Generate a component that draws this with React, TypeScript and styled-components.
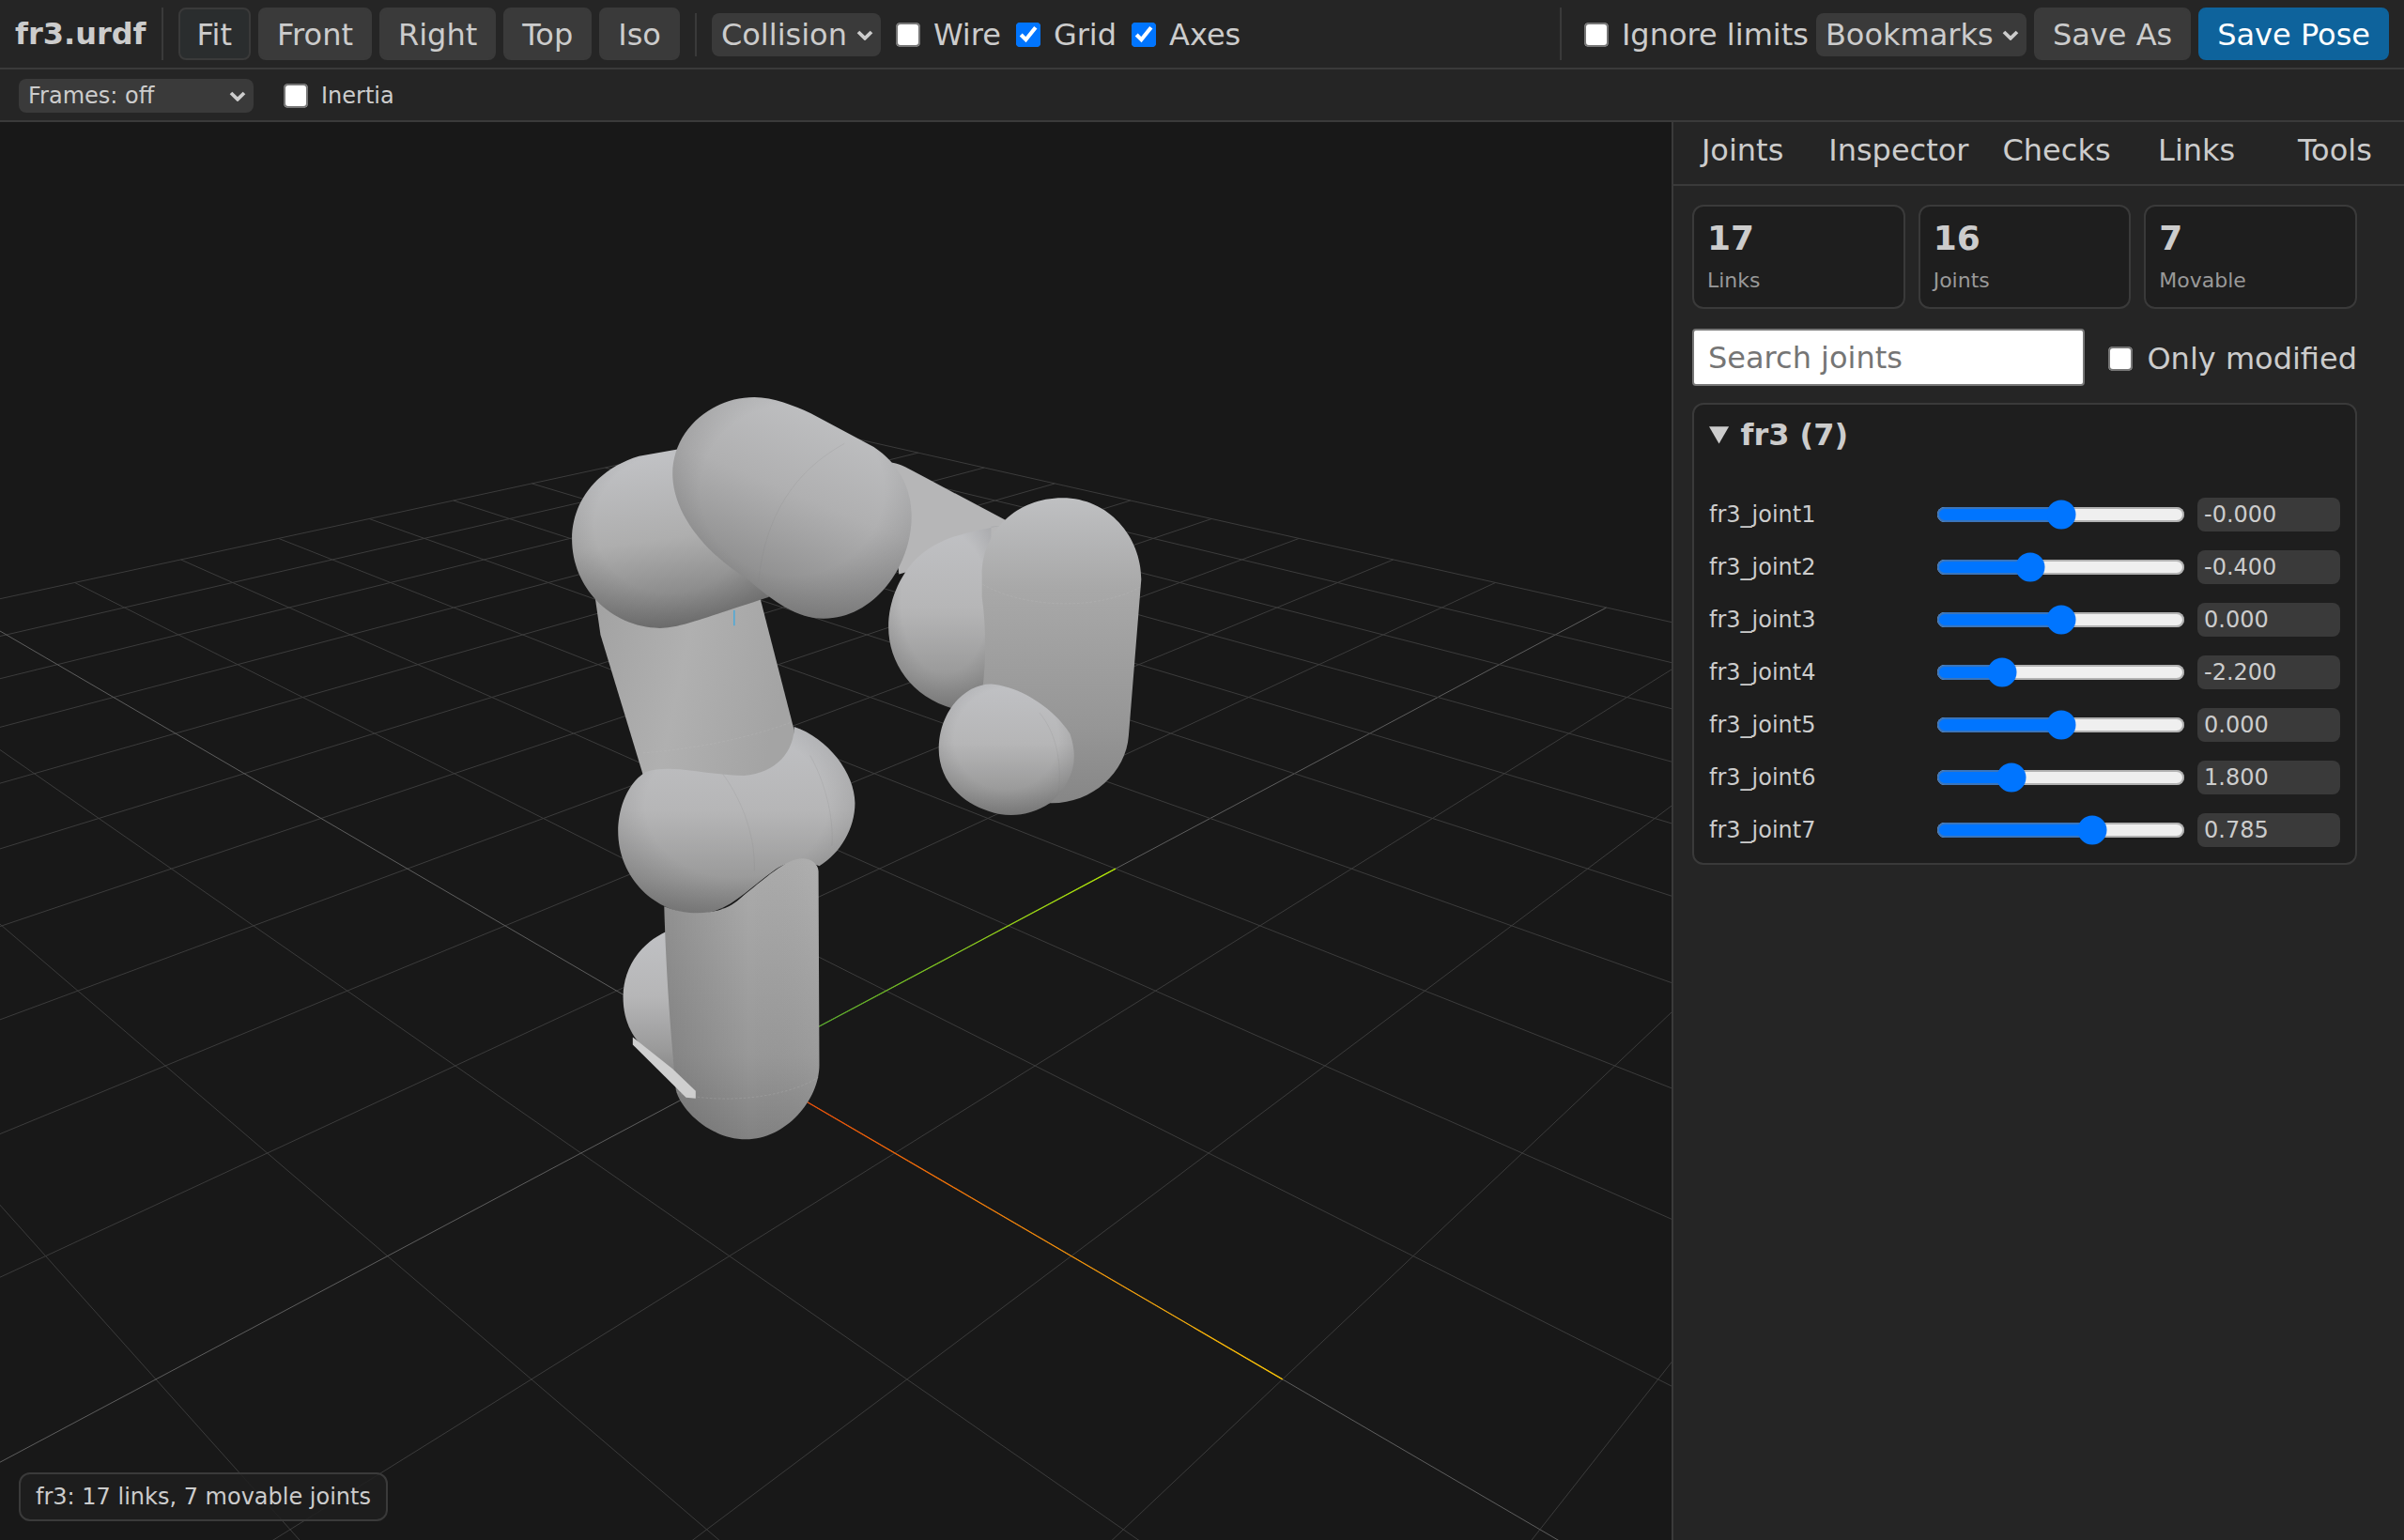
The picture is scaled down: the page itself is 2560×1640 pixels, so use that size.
import React from 'react'
import styled, {createGlobalStyle} from 'styled-components'

const GlobalStyle = createGlobalStyle`
  html, body {
    margin: 0;
    padding: 0;
    background: #181818;
    overflow: hidden;
  }
  #root {
    zoom: 2;
    width: 1280px;
    height: 820px;
    overflow: hidden;
  }
`

const Shell = styled.div`
  display: flex;
  flex-direction: column;
  width: 1280px;
  height: 820px;
  background: #252525;
  color: #cccccc;
  font-family: 'DejaVu Sans', sans-serif;
  font-size: 16px;
`

const Toolbar = styled.div`
  display: flex;
  align-items: stretch;
  gap: 8px;
  height: 36px;
  box-sizing: content-box;
  padding: 0 8px;
  border-bottom: 1px solid #3a3a3a;
  & > * {
    margin-top: 4px;
    margin-bottom: 4px;
  }
`

const SubBar = styled.div`
  display: flex;
  align-items: center;
  gap: 12px;
  height: 27px;
  padding: 0 10px;
  border-bottom: 1px solid #3a3a3a;
  font-size: 12px;
`

const Brand = styled.div`
  display: flex;
  align-items: center;
  font-weight: 700;
`

const Separator = styled.div<{$inset?: boolean}>`
  width: 1px;
  background: #3a3a3a;
  margin-top: ${p => (p.$inset ? '7px' : '4px')};
  margin-bottom: ${p => (p.$inset ? '6px' : '4px')};
`

const Group = styled.div`
  display: flex;
  align-items: center;
  gap: 4px;
`

const Spacer = styled.div`
  flex: 1;
`

const ToolButton = styled.button<{$variant?: 'active' | 'primary'}>`
  height: 28px;
  padding: 1px 9px 0;
  font: inherit;
  border-radius: 4px;
  border: 1px solid
    ${p => (p.$variant === 'primary' ? '#0e639c' : '#3a3a3a')};
  color: ${p => (p.$variant === 'primary' ? '#ffffff' : '#cccccc')};
  background: ${p =>
    p.$variant === 'primary'
      ? '#0e639c'
      : p.$variant === 'active'
        ? '#2a2d2e'
        : '#3a3a3a'};
`

const chevron = encodeURIComponent(
  '<svg xmlns="http://www.w3.org/2000/svg" viewBox="0 0 9 5.5"><path d="M1 1l3.5 3.4L8 1" fill="none" stroke="#cccccc" stroke-width="1.9"/></svg>',
)

const Select = styled.select<{$width?: number}>`
  appearance: none;
  font: inherit;
  color: #cccccc;
  border: none;
  border-radius: 4px;
  margin-top: 1px;
  padding: 2px 17.5px 2px 5px;
  width: ${p => (p.$width ? `${p.$width}px` : 'auto')};
  background: #3a3a3a url("data:image/svg+xml,${chevron}") no-repeat right 4px center / 9px 5.5px;
`

const CheckLabel = styled.label<{$gap?: number}>`
  display: inline-flex;
  align-items: center;
  gap: ${p => p.$gap ?? 4}px;
  padding-top: 1px;
  white-space: nowrap;
`

const Main = styled.div`
  flex: 1;
  display: flex;
  min-height: 0;
`

const Viewport = styled.div`
  position: relative;
  flex: 1;
  background: #181818;
  overflow: hidden;
  svg {
    display: block;
    width: 100%;
    height: 100%;
  }
`

const StatusBadge = styled.div`
  position: absolute;
  left: 10px;
  bottom: 10px;
  padding: 5px 8px;
  font-size: 12px;
  line-height: 14px;
  background: rgba(30, 30, 30, 0.85);
  border: 1px solid #3a3a3a;
  border-radius: 6px;
`

const Sidebar = styled.aside`
  width: 389px;
  display: flex;
  flex-direction: column;
  border-left: 1px solid #3a3a3a;
`

const Tabs = styled.div`
  display: flex;
  height: 33px;
  border-bottom: 1px solid #3a3a3a;
`

const Tab = styled.div`
  flex: 1 1 0;
  display: flex;
  align-items: center;
  justify-content: center;
  padding: 0 9px 3px;
`

const SideContent = styled.div`
  display: flex;
  flex-direction: column;
  padding: 10px 25px 10px 10px;
`

const Stats = styled.div`
  display: grid;
  grid-template-columns: repeat(3, 1fr);
  gap: 7px;
`

const StatCard = styled.div`
  height: 55.5px;
  box-sizing: border-box;
  padding: 6.5px 7px;
  background: #1e1e1e;
  border: 1px solid #3a3a3a;
  border-radius: 6px;
`

const StatValue = styled.div`
  font-size: 18px;
  line-height: 21px;
  font-weight: 700;
`

const StatLabel = styled.div`
  margin-top: 5.5px;
  font-size: 11px;
  line-height: 13px;
  color: #999999;
`

const SearchRow = styled.div`
  display: flex;
  align-items: center;
  gap: 8.5px;
  margin-top: 10.5px;
`

const SearchInput = styled.input`
  flex: 1;
  min-width: 0;
  height: 30.5px;
  box-sizing: border-box;
  padding: 0 7.5px;
  font: inherit;
  background: #ffffff;
  border: 1px solid #767676;
  border-radius: 2px;
  &::placeholder {
    color: #757575;
  }
`

const JointPanel = styled.details`
  margin-top: 9px;
  padding: 6.5px 8px 8.5px;
  background: #1e1e1e;
  border: 1px solid #3a3a3a;
  border-radius: 6px;
`

const PanelTitle = styled.summary`
  font-weight: 700;
  line-height: 19px;
  margin-bottom: 24px;
`

const PanelName = styled.span`
  margin-left: 3px;
`

const JointList = styled.div`
  display: flex;
  flex-direction: column;
  gap: 10px;
`

const JointRow = styled.div`
  display: grid;
  grid-template-columns: 114.5px 132.5px 76px;
  column-gap: 6.5px;
  align-items: center;
  height: 18px;
  font-size: 12px;
`

const JointSlider = styled.input`
  margin: 0;
  width: 132.5px;
`

const JointValue = styled.input`
  width: 100%;
  box-sizing: border-box;
  height: 18px;
  padding: 2px 3.5px;
  font: inherit;
  color: #cccccc;
  background: #3a3a3a;
  border: none;
  border-radius: 4px;
`

const joints = [
  {name: 'fr3_joint1', value: '-0.000', pos: 0.5},
  {name: 'fr3_joint2', value: '-0.400', pos: 0.36},
  {name: 'fr3_joint3', value: '0.000', pos: 0.5},
  {name: 'fr3_joint4', value: '-2.200', pos: 0.233},
  {name: 'fr3_joint5', value: '0.000', pos: 0.5},
  {name: 'fr3_joint6', value: '1.800', pos: 0.274},
  {name: 'fr3_joint7', value: '0.785', pos: 0.645},
]

// floor grid homography, i along +X, j along +Y (canvas pixels)
const project = (i: number, j: number) => {
  const w = 1 - 0.07604 * (i - j)
  return {
    x: (793.5 + 86.9 * i + 221.8 * j) / w,
    y: (1005 + 9.485 * (i - j)) / w,
  }
}

const gridSegments = () => {
  const lines: {a: {x: number; y: number}; b: {x: number; y: number}; major: boolean}[] = []
  for (let k = -10; k <= 10; k++) {
    lines.push({
      a: project(k, Math.max(-10, k - 12.4)),
      b: project(k, 10),
      major: k === 0,
    })
    lines.push({
      a: project(-10, k),
      b: project(Math.min(10, k + 12.4), k),
      major: k === 0,
    })
  }
  return lines
}

// one shaded body of the arm: base gradient plus a soft darkening at its rim
const Part = ({d, fill}: {d: string; fill: string}) => (
  <>
    <path fill={`url(#${fill})`} d={d} />
    <path fill="url(#rim)" d={d} />
  </>
)

const RobotScene = () => {
  const origin = project(0, 0)
  const xEnd = project(3, 0)
  const yEnd = project(0, 3)
  return (
    <svg viewBox="0 0 1780 1510" preserveAspectRatio="none">
      <defs>
        <linearGradient id="axisX" gradientUnits="userSpaceOnUse" x1={origin.x} y1={origin.y} x2={xEnd.x} y2={xEnd.y}>
          <stop offset="0" stopColor="#f03c00" />
          <stop offset="1" stopColor="#ffc800" />
        </linearGradient>
        <linearGradient id="axisY" gradientUnits="userSpaceOnUse" x1={origin.x} y1={origin.y} x2={yEnd.x} y2={yEnd.y}>
          <stop offset="0" stopColor="#40a030" />
          <stop offset="1" stopColor="#b4e800" />
        </linearGradient>
        <radialGradient id="rim" cx="0.5" cy="0.42" r="0.62">
          <stop offset="0.62" stopColor="#000" stopOpacity="0" />
          <stop offset="1" stopColor="#000" stopOpacity="0.14" />
        </radialGradient>
        <linearGradient id="dome" x1="0" y1="0" x2="0" y2="1">
          <stop offset="0" stopColor="#c0c1c4" />
          <stop offset="0.45" stopColor="#b6b6b7" />
          <stop offset="0.8" stopColor="#9b9b9b" />
          <stop offset="1" stopColor="#868686" />
        </linearGradient>
        <linearGradient id="bigCap" x1="0.75" y1="0" x2="0.3" y2="1">
          <stop offset="0" stopColor="#c2c3c5" />
          <stop offset="0.45" stopColor="#b0b0b1" />
          <stop offset="1" stopColor="#808080" />
        </linearGradient>
        <linearGradient id="elbow" x1="0.4" y1="0" x2="0.55" y2="1">
          <stop offset="0" stopColor="#c2c3c6" />
          <stop offset="0.5" stopColor="#aeaeae" />
          <stop offset="1" stopColor="#777777" />
        </linearGradient>
        <linearGradient id="capsule" x1="0" y1="0" x2="0" y2="1">
          <stop offset="0" stopColor="#bfc0c2" />
          <stop offset="0.3" stopColor="#a8a8a8" />
          <stop offset="0.75" stopColor="#969696" />
          <stop offset="1" stopColor="#868686" />
        </linearGradient>
        <linearGradient id="lowerArm" x1="0" y1="0" x2="0" y2="1">
          <stop offset="0" stopColor="#acacac" />
          <stop offset="0.7" stopColor="#989898" />
          <stop offset="1" stopColor="#828282" />
        </linearGradient>
        <linearGradient id="lowerArmSide" x1="0" y1="0" x2="1" y2="0">
          <stop offset="0" stopColor="#000" stopOpacity="0.14" />
          <stop offset="0.55" stopColor="#000" stopOpacity="0" />
          <stop offset="1" stopColor="#fff" stopOpacity="0.04" />
        </linearGradient>
        <linearGradient id="forearm" x1="0" y1="0" x2="1" y2="0.2">
          <stop offset="0" stopColor="#a2a2a2" />
          <stop offset="0.5" stopColor="#b0b0b0" />
          <stop offset="1" stopColor="#a4a4a4" />
        </linearGradient>
      </defs>

      <g>
        {gridSegments().map((l, n) => (
          <line
            key={n}
            x1={l.a.x}
            y1={l.a.y}
            x2={l.b.x}
            y2={l.b.y}
            stroke={l.major ? '#5e5e5e' : '#3c3c3c'}
            strokeWidth="1"
          />
        ))}
        <line x1={origin.x} y1={origin.y} x2={xEnd.x} y2={xEnd.y} stroke="url(#axisX)" strokeWidth="1.2" />
        <line x1={origin.x} y1={origin.y} x2={yEnd.x} y2={yEnd.y} stroke="url(#axisY)" strokeWidth="1.2" />
      </g>

      {/* arm traced from the render, coordinates in crop space */}
      <g transform="translate(560 270) scale(0.4464 0.5357)">
        <path fill="#b6b6b7" d="M860,172 C880,172 900,178 920,188 L1150,290 L1120,340 L890,395 Z" />
        <Part fill="dome" d="M1135,298 C1060,310 985,320 930,365 C890,400 865,450 865,500 C865,570 920,640 1020,662 L1110,640 L1110,300 Z" />
        <path fill="url(#capsule)" d="M1088,400 C1086,310 1170,243 1280,243 C1390,243 1468,320 1468,405 L1438,715 C1432,790 1350,850 1255,850 L1110,850 L1090,620 C1098,560 1098,500 1088,440 Z" />
        <Part fill="dome" d="M985,742 C985,670 1045,613 1110,613 C1180,618 1258,660 1298,712 C1322,770 1300,812 1250,850 C1205,875 1150,880 1105,866 C1040,850 985,805 985,742 Z" />

        <path fill="url(#forearm)" d="M165,440 L178,515 L280,795 L520,800 C600,790 640,750 640,705 L555,430 Z" />
        <Part fill="elbow" d="M365,146 L270,160 C170,185 110,250 110,325 C110,420 200,500 320,502 C370,502 430,480 580,440 L500,300 Z" />
        <Part fill="bigCap" d="M350,195 C350,110 440,43 545,43 C590,43 640,60 680,75 L830,142 C885,172 920,220 920,280 C920,380 830,483 710,483 C650,483 590,450 530,405 C440,360 350,280 350,195 Z" />

        <Part fill="dome" d="M285,788 C235,815 220,870 220,905 C220,1000 310,1070 410,1070 C480,1070 530,1020 590,985 C620,965 660,960 700,975 C750,950 785,900 785,850 C785,790 720,720 640,698 C640,745 600,790 520,795 C430,795 350,770 285,788 Z" />

        <path fill="url(#dome)" d="M335,1105 C270,1130 232,1180 232,1235 C232,1290 260,1320 290,1345 L370,1395 L350,1105 Z" />
        <path fill="url(#lowerArm)" d="M330,1055 C400,1078 470,1070 510,1040 C570,1000 620,960 660,960 C680,960 697,970 698,985 L700,1370 C700,1440 620,1518 525,1518 C440,1518 370,1460 358,1420 C345,1300 335,1200 330,1055 Z" />
        <path fill="url(#lowerArmSide)" d="M330,1055 C400,1078 470,1070 510,1040 C570,1000 620,960 660,960 C680,960 697,970 698,985 L700,1370 C700,1440 620,1518 525,1518 C440,1518 370,1460 358,1420 C345,1300 335,1200 330,1055 Z" />
        <path fill="#cfcfcf" d="M255,1315 L350,1378 L405,1422 L405,1437 L382,1435 L255,1330 Z" />

        <g fill="none" stroke="#7a7a7a" strokeOpacity="0.22" strokeWidth="1.5">
          <path d="M470,792 C520,850 548,920 545,985" />
          <path d="M678,755 C715,810 735,880 730,935" />
          <path d="M760,135 C640,190 570,280 555,410" />
          <path d="M1225,670 C1265,710 1280,770 1270,830" />
        </g>
        <g fill="none" stroke="#c4c4c4" strokeOpacity="0.3" strokeWidth="1.5" strokeDasharray="6 4">
          <path d="M1090,415 C1180,460 1360,470 1466,420" />
          <path d="M280,750 C360,745 500,730 630,690" />
          <path d="M360,1425 C430,1445 600,1445 698,1395" />
        </g>
        <line x1="497" y1="466" x2="497" y2="497" stroke="#2aa8e8" strokeWidth="2.5" />
      </g>
    </svg>
  )
}

export default function App() {
  return (
    <Shell>
      <GlobalStyle />
      <Toolbar>
        <Brand>fr3.urdf</Brand>
        <Separator />
        <Group>
          <ToolButton $variant="active">Fit</ToolButton>
          <ToolButton>Front</ToolButton>
          <ToolButton>Right</ToolButton>
          <ToolButton>Top</ToolButton>
          <ToolButton>Iso</ToolButton>
        </Group>
        <Separator $inset />
        <Group>
          <Select defaultValue="collision">
            <option value="visual">Visual</option>
            <option value="collision">Collision</option>
          </Select>
          <CheckLabel><input type="checkbox" />Wire</CheckLabel>
          <CheckLabel><input type="checkbox" defaultChecked />Grid</CheckLabel>
          <CheckLabel><input type="checkbox" defaultChecked />Axes</CheckLabel>
        </Group>
        <Spacer />
        <Separator />
        <Group>
          <CheckLabel><input type="checkbox" />Ignore limits</CheckLabel>
          <Select>
            <option>Bookmarks</option>
          </Select>
          <ToolButton>Save As</ToolButton>
          <ToolButton $variant="primary">Save Pose</ToolButton>
        </Group>
      </Toolbar>
      <SubBar>
        <Select $width={125}>
          <option>Frames: off</option>
          <option>Frames: all</option>
        </Select>
        <CheckLabel><input type="checkbox" />Inertia</CheckLabel>
      </SubBar>
      <Main>
        <Viewport>
          <RobotScene />
          <StatusBadge>fr3: 17 links, 7 movable joints</StatusBadge>
        </Viewport>
        <Sidebar>
          <Tabs>
            <Tab>Joints</Tab>
            <Tab>Inspector</Tab>
            <Tab>Checks</Tab>
            <Tab>Links</Tab>
            <Tab>Tools</Tab>
          </Tabs>
          <SideContent>
            <Stats>
              <StatCard><StatValue>17</StatValue><StatLabel>Links</StatLabel></StatCard>
              <StatCard><StatValue>16</StatValue><StatLabel>Joints</StatLabel></StatCard>
              <StatCard><StatValue>7</StatValue><StatLabel>Movable</StatLabel></StatCard>
            </Stats>
            <SearchRow>
              <SearchInput placeholder="Search joints" />
              <CheckLabel $gap={4.5}><input type="checkbox" />Only modified</CheckLabel>
            </SearchRow>
            <JointPanel open>
              <PanelTitle><PanelName>fr3 (7)</PanelName></PanelTitle>
              <JointList>
                {joints.map(j => (
                  <JointRow key={j.name}>
                    <span>{j.name}</span>
                    <JointSlider type="range" min={0} max={1} step={0.001} defaultValue={j.pos} />
                    <JointValue readOnly value={j.value} />
                  </JointRow>
                ))}
              </JointList>
            </JointPanel>
          </SideContent>
        </Sidebar>
      </Main>
    </Shell>
  )
}
